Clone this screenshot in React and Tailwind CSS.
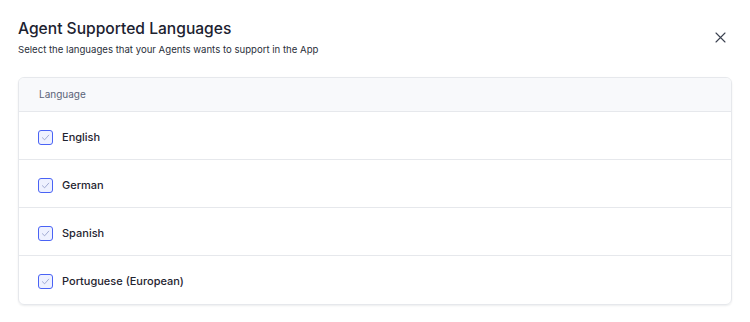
import React from "react";

const languages = ["English", "German", "Spanish", "Portuguese (European)"];

const Checkbox = () => (
  <span className="flex h-[15px] w-[15px] items-center justify-center rounded-[3px] border border-[#4a63f5] bg-[#eef1ff]">
    <svg width="9" height="9" viewBox="0 0 10 10" fill="none">
      <path d="M1.5 5.2 L4 7.6 L8.6 2.4" stroke="#8f9bc9" strokeWidth="0.9" strokeLinecap="round" strokeLinejoin="round" />
    </svg>
  </span>
);

const App = () => {
  return (
    <div className="h-[322px] w-[750px] bg-white font-['Inter',sans-serif] text-[#1f2430]">
      <div className="flex items-start justify-between pl-[18px] pr-[24px] pt-[18px]">
        <div>
          <h2 className="text-[15.6px] font-medium leading-[22px] text-[#1c2230]">Agent Supported Languages</h2>
          <p className="mt-[3px] text-[9.6px] leading-[14px] text-[#2a2f3a]">
            Select the languages that your Agents wants to support in the App
          </p>
        </div>
        <button className="mt-[14px] text-[#3b4150]">
          <svg width="11" height="11" viewBox="0 0 11 11" fill="none">
            <path d="M1 1 L10 10 M10 1 L1 10" stroke="currentColor" strokeWidth="1.1" strokeLinecap="round" />
          </svg>
        </button>
      </div>

      <div className="mx-[18px] mt-[20px] overflow-hidden rounded-[6px] border border-[#e6e8ec] shadow-[0_1px_2px_rgba(16,24,40,0.08)]">
        <div className="flex h-[34px] items-center border-b border-[#e6e8ec] bg-[#f8f9fb] pl-[20px] text-[10px] text-[#5b6478]">
          Language
        </div>
        {languages.map((lang, i) => (
          <div
            key={lang}
            className={`flex h-[48px] items-center gap-[9px] pl-[19px] pt-[3px] ${
              i < languages.length - 1 ? "border-b border-[#e6e8ec]" : ""
            }`}
          >
            <Checkbox />
            <span className="text-[11px] font-medium text-[#1f2430]">{lang}</span>
          </div>
        ))}
      </div>
    </div>
  );
};

export default App;
